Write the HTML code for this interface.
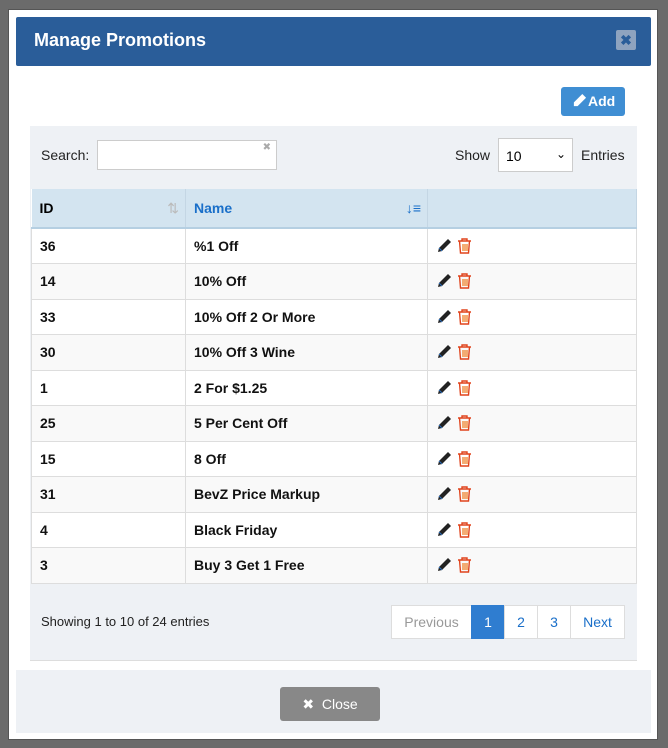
<!DOCTYPE html>
<html><head><style>
*{box-sizing:border-box;margin:0;padding:0}
body{width:668px;height:748px;background:#6b6b6b;font-family:"Liberation Sans",sans-serif;position:relative;overflow:hidden}
.modal{position:absolute;left:8px;top:9px;width:650px;height:731px;background:#fff;border:1px solid #555}
.hdr{position:absolute;left:16px;top:17px;width:635px;height:49px;background:#2a5d99;border-radius:2px}
.hdr h1{position:absolute;left:18px;top:13px;color:#fff;font-size:18px;font-weight:bold}
.x{position:absolute;right:15px;top:13px;width:20px;height:20px;background:#8ea3bf;border-radius:2px;color:#2a5d99;font-size:14px;text-align:center;line-height:20px;font-weight:bold}
.add{position:absolute;left:561px;top:87px;width:64px;height:29px;background:#3f8ed3;border-radius:3px;color:#fff;font-size:14px;font-weight:bold;line-height:29px;padding-left:10px}
.panel{position:absolute;left:30px;top:126px;width:607px;height:535px;background:#eef1f5;border-bottom:1px solid #ddd}
.lbl{position:absolute;font-size:14px;color:#222}
.inp{position:absolute;left:97px;top:140px;width:180px;height:30px;background:#fff;border:1px solid #ccc}
.sel{position:absolute;left:498px;top:138px;width:75px;height:34px;background:#fff;border:1px solid #ccc;font-size:14px;padding:9px 0 0 7px}
table{position:absolute;left:31px;top:189px;width:606px;border-collapse:collapse;background:#fff}
th{background:#d3e4f0;height:39px;text-align:left;font-size:14px;padding-left:8px;border-right:1px solid #c4d6e4;border-bottom:2px solid #b5cfe2}
td{height:35.5px;font-size:14px;font-weight:bold;padding-left:8px;border:1px solid #ddd;color:#111}
tr:nth-child(odd) td{background:#f9f9f9}
.pg{position:absolute;top:605px;height:34px;border:1px solid #ddd;background:#fff;font-size:14px;color:#1a6fc9;text-align:center;line-height:32px}
.foot{position:absolute;left:16px;top:670px;width:635px;height:63px;background:#eef1f5}
.close{position:absolute;left:280px;top:687px;width:100px;height:34px;background:#888;border-radius:3px;color:#fff;font-size:14px;text-align:center;line-height:34px}
</style></head><body>
<div class="modal"></div>
<div class="hdr"><h1>Manage Promotions</h1><div class="x">✖</div></div>
<div class="add"><svg width="17" height="15" viewBox="0 0 16 16" style="vertical-align:-2px"><path d="M11 1l4 4-9 9H2v-4z" fill="#fff"/></svg>Add</div>
<div class="panel"></div>
<div class="lbl" style="left:41px;top:147px">Search:</div>
<div class="inp"><span style="position:absolute;right:5px;top:1px;color:#aaa;font-size:10px">✖</span></div>
<div class="lbl" style="left:455px;top:147px">Show</div>
<div class="sel">10<span style="position:absolute;right:6px;top:8px;font-size:12px">⌄</span></div>
<div class="lbl" style="left:581px;top:147px">Entries</div>
<table>
<tr><th style="width:154px">ID<span style="float:right;margin-right:6px;color:#bbb;font-weight:normal">⇅</span></th><th style="width:242px;color:#1a6fc9">Name<span style="float:right;margin-right:6px">↓≡</span></th><th></th></tr>
<tr><td>36</td><td>%1 Off</td><td class="ic"></td></tr>
<tr><td>14</td><td>10% Off</td><td class="ic"></td></tr>
<tr><td>33</td><td>10% Off 2 Or More</td><td class="ic"></td></tr>
<tr><td>30</td><td>10% Off 3 Wine</td><td class="ic"></td></tr>
<tr><td>1</td><td>2 For $1.25</td><td class="ic"></td></tr>
<tr><td>25</td><td>5 Per Cent Off</td><td class="ic"></td></tr>
<tr><td>15</td><td>8 Off</td><td class="ic"></td></tr>
<tr><td>31</td><td>BevZ Price Markup</td><td class="ic"></td></tr>
<tr><td>4</td><td>Black Friday</td><td class="ic"></td></tr>
<tr><td>3</td><td>Buy 3 Get 1 Free</td><td class="ic"></td></tr>
</table>
<div class="lbl" style="left:41px;top:614px;font-size:13px">Showing 1 to 10 of 24 entries</div>
<div class="pg" style="left:391px;width:81px;color:#999">Previous</div>
<div class="pg" style="left:471px;width:34px;background:#2f7dd0;color:#fff;border-color:#2f7dd0">1</div>
<div class="pg" style="left:504px;width:34px">2</div>
<div class="pg" style="left:537px;width:34px">3</div>
<div class="pg" style="left:570px;width:55px">Next</div>
<div class="foot"></div>
<div class="close">✖ &nbsp;Close</div>
<script>
document.querySelectorAll('.ic').forEach(function(td){td.innerHTML='<svg width="40" height="18" viewBox="0 0 40 18" style="vertical-align:middle"><path d="M12 2l3 3-9 9-4 1 1-4z" fill="#222"/><path d="M3 11l3 3" stroke="#2a6fc0" stroke-width="1"/><g fill="none" stroke="#e0431c" stroke-width="1.4"><path d="M22 4h13M26 4V2h5v2M23.5 4l1 12h8l1-12"/><path d="M27 7v7M29 7v7M31 7v7" stroke="#f08a3a"/></g></svg>';});
</script>
</body></html>
